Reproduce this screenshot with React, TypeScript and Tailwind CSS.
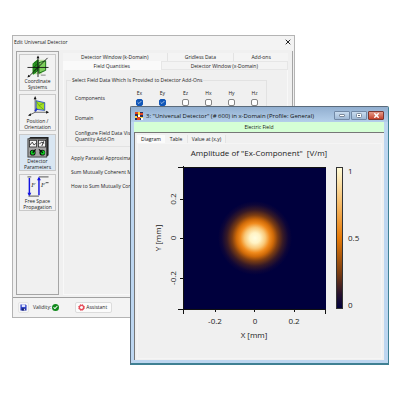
import React, { useState } from 'react';
import { Check, X } from 'lucide-react';

const FIELD_COMPONENTS = ['Ex', 'Ey', 'Ez', 'Hx', 'Hy', 'Hz'];

function CoordinateIcon() {
  return (
    <svg viewBox="0 0 24 24" className="h-6 w-6" fill="none">
      <path d="M6 9l5-4h8v10l-4 5H6z" fill="#b9dd9a" />
      <path d="M7 9l5-4v11l-5 4z" fill="#3fae2c" stroke="#0c7a10" strokeWidth="1" />
      <path d="M13 8l7-2v10l-7 3z" fill="#7fd05b" stroke="#146b14" strokeWidth="1" />
      <path d="M9 7v12M11 6v11M7 13l5-4M7 17l5-4" stroke="#085c08" strokeWidth="0.8" />
      <path d="M12 2v21M1 13h22M3 22L22 3" stroke="#111" strokeWidth="0.9" />
      <path d="M12 0.5l-1.5 3h3zM1 23.5l1-3 2 2z" fill="#111" />
      <path d="M15 21h5" stroke="#666" strokeWidth="0.8" />
    </svg>
  );
}

function PositionIcon() {
  return (
    <svg viewBox="0 0 24 24" className="h-6 w-6" fill="none">
      <path d="M9 18V4M9 18h13M9 18l-6 3" stroke="#444" strokeWidth="0.8" />
      <path d="M9 1l-1.5 3.5h3zM23.5 18l-3-1.5v3zM1.5 21.5l3-2.5v3z" fill="#111" />
      <path d="M10 6l9 2v8l-9-1z" fill="#a6df25" stroke="#2d4fd8" strokeWidth="1" />
      <path d="M10 6l3 5 6 5M13 11l6-3" stroke="#5ca319" strokeWidth="0.8" />
      <path d="M9 17l2-3" stroke="#2236cc" strokeWidth="2" />
    </svg>
  );
}

function DetectorIcon() {
  return (
    <svg viewBox="0 0 24 24" className="h-6 w-6" fill="none">
      <path d="M2 4l2-2h19v19l-2 2z" fill="#222" />
      <rect x="1.5" y="4" width="19.5" height="19" fill="#a4a4a4" stroke="#444" />
      <rect x="3" y="5.5" width="7.5" height="7" fill="#f2f2f2" stroke="#222" strokeWidth="0.8" />
      <rect x="12.5" y="5.5" width="7.500" height="7" fill="#f2f2f2" stroke="#222" strokeWidth="0.8" />
      <path d="M3.500 10.500l2.500-3 2 3 2-2M13.500 9.500l2-2 3 1M16 11.500l2-5" stroke="#222" strokeWidth="0.9" />
      <circle cx="6.500" cy="18.5" r="3" fill="#0b0b0b" />
      <circle cx="16.500" cy="18.5" r="3" fill="#0b0b0b" />
      <circle cx="6.5" cy="18.5" r="2.2" fill="#0fce22" />
      <circle cx="17" cy="18.5" r="2.2" fill="#0fce22" />
      <path d="M6.500 18.500l3-3.500M17 18.500l-4-3.500" stroke="#0b0b0b" strokeWidth="1.3" />
    </svg>
  );
}

function PropagationIcon() {
  return (
    <svg viewBox="0 0 24 24" className="h-6 w-6" fill="none">
      <path d="M3 3v18M13 3v18" stroke="#1414e0" strokeWidth="1.5" />
      <path d="M3 22.5l-2-4h4zM13 1.5l-2 4h4z" fill="#1414e0" />
      <path d="M1 2h4M13 2h10M2 22h11" stroke="#777" strokeWidth="1.2" />
      <text x="5" y="13" fontSize="7" fontStyle="italic" fontFamily="Liberation Serif" fill="#222">F</text>
      <text x="15" y="13" fontSize="7" fontStyle="italic" fontFamily="Liberation Serif" fill="#222">F</text>
      <path d="M20 8h3" stroke="#333" strokeWidth="0.9" />
    </svg>
  );
}

const SECTIONS = [
  { lines: ['Coordinate', 'Systems'], Icon: CoordinateIcon },
  { lines: ['Position /', 'Orientation'], Icon: PositionIcon },
  { lines: ['Detector', 'Parameters'], Icon: DetectorIcon },
  { lines: ['Free Space', 'Propagation'], Icon: PropagationIcon },
];

function Sidebar() {
  const [active, setActive] = useState(2);

  return (
    <nav className="flex w-[43px] shrink-0 flex-col gap-[3px] border border-[#a5a5a5] p-[2px]">
      {SECTIONS.map(({ lines, Icon }, i) => (
        <button
          key={lines[0]}
          type="button"
          onClick={() => setActive(i)}
          className={`flex h-[37px] flex-col items-center border border-[#c9c9c9] ${
            i === active ? 'bg-[#d9e6f2]' : 'bg-[#f2f2f2]'
          }`}
        >
          <Icon />
          <span className="text-[5px] leading-[6px] whitespace-nowrap">
            {lines[0]}
            <br />
            {lines[1]}
          </span>
        </button>
      ))}
    </nav>
  );
}

function FieldQuantities() {
  const [checked, setChecked] = useState(['Ex', 'Ey']);

  const toggle = (name: string) => {
    setChecked((prev) => (prev.includes(name) ? prev.filter((c) => c !== name) : [...prev, name]));
  };

  return (
    <div className="flex-1 border border-t-0 border-[#f8f8f8] pt-[7px] pr-5 pl-[2px]">
      <fieldset className="border border-[#e2e2e2] pb-1 pl-2">
        <legend className="-ml-1 px-px leading-[6px]">
          Select Field Data Which Is Provided to Detector Add-Ons
        </legend>
        <div className="flex items-center pt-[7px]">
          <span className="w-[53px]">Components</span>
          <div className="flex">
            {FIELD_COMPONENTS.map((name) => (
              <label key={name} className="flex w-[23px] flex-col items-center gap-[3px]">
                {name}
                <span className="grid h-[7px] w-[7px] place-items-center">
                  <input
                    type="checkbox"
                    checked={checked.includes(name)}
                    onChange={() => toggle(name)}
                    className="col-start-1 row-start-1 h-[7px] w-[7px] appearance-none rounded-[2px] border border-[#858585] bg-white checked:border-[#1056b8] checked:bg-[#1056b8]"
                  />
                  {checked.includes(name) && (
                    <Check className="pointer-events-none col-start-1 row-start-1 h-[5px] w-[5px] text-white" strokeWidth={3} />
                  )}
                </span>
              </label>
            ))}
          </div>
        </div>
        <p className="pt-[9px]">Domain</p>
        <p className="pt-[9px]">
          Configure Field Data Visualization
          <br />
          Quantity Add-On
        </p>
      </fieldset>
      <div className="flex flex-col gap-2 pt-2 pl-[5px]">
        <p>Apply Paraxial Approximation</p>
        <p>Sum Mutually Coherent Modes</p>
        <p>How to Sum Mutually Correlated</p>
      </div>
    </div>
  );
}

function EditDetectorDialog() {
  return (
    <section className="absolute top-[35px] left-[12px] flex h-[283px] w-[283px] flex-col border border-[#b4b4b4] bg-[#f0f0f0] text-[5px] leading-[6px] whitespace-nowrap text-[#222]">
      <header className="flex h-[14px] shrink-0 items-center justify-between bg-[#f3f3f3] pr-[2px] pb-[3px] pl-px">
        <h1>Edit Universal Detector</h1>
        <button type="button" aria-label="Close">
          <X className="h-2 w-2" strokeWidth={3} />
        </button>
      </header>
      <div className="flex flex-1 gap-1 pt-px pr-[2px] pb-[2px] pl-[3px]">
        <Sidebar />
        <div className="flex flex-1 flex-col border-r border-[#a5a5a5] pt-[2px] pr-1">
          <div role="tablist">
            <div className="flex h-2">
              <button type="button" role="tab" className="flex-[104] border-r border-[#e3e3e3] bg-[#f4f4f4]">Detector Window (k-Domain)</button>
              <button type="button" role="tab" className="flex-[66] border-r border-[#e3e3e3] bg-[#f4f4f4]">Gridless Data</button>
              <button type="button" role="tab" className="flex-[54] bg-[#f4f4f4]">Add-ons</button>
            </div>
            <div className="flex h-[9px]">
              <button type="button" role="tab" aria-selected="true" className="flex-[98] bg-[#fafafa]">Field Quantities</button>
              <button type="button" role="tab" className="flex-[126] border border-[#e6e6e6] bg-[#f3f3f3]">Detector Window (x-Domain)</button>
            </div>
          </div>
          <FieldQuantities />
        </div>
      </div>
      <footer className="flex h-5 shrink-0 items-center border-t border-[#a0a0a0] bg-[#f3f3f3] pb-px pl-[5px]">
        <button type="button" aria-label="Save" className="rounded-[2px] border border-[#e4e4e4] bg-[#f7f7f7] p-px">
          <svg viewBox="0 0 8 8" className="h-[7px] w-[7px]">
            <path d="M0.500 0.500h6l1 1v6h-7z" fill="#2c3fc5" />
            <path d="M2 0.500h4v3h-4z" fill="#dfe5ff" />
            <path d="M2 5h4v2.500h-4z" fill="#15206e" />
            <path d="M4.500 5.500h1v2h-1z" fill="#fff" />
          </svg>
        </button>
        <span className="pl-1">Validity:</span>
        <span className="ml-px flex h-[7px] w-[7px] items-center justify-center rounded-full bg-[#128a1d] text-white">
          <Check className="h-[5px] w-[5px]" strokeWidth={5} />
        </span>
        <button type="button" className="ml-4 flex h-[11px] items-center gap-px rounded-[2px] border border-[#dcdcdc] bg-[#fbfbfb] pr-1 pl-[2px]">
          <svg viewBox="0 0 8 8" className="h-[7px] w-[7px]" fill="none">
            <circle cx="4" cy="4" r="2.4" stroke="#e8505c" strokeWidth="1.4" />
            <circle cx="4" cy="4" r="3.3" stroke="#e22b3c" strokeWidth="1" strokeDasharray="1.5 1.1" />
          </svg>
          Assistant
        </button>
      </footer>
    </section>
  );
}

// Amplitude map with its axes and colour bar
function AmplitudeChart() {
  return (
    <svg viewBox="0 0 243 214" className="w-full" fill="#222" fontSize="8" textAnchor="middle">
      <defs>
        <radialGradient id="spot">
          <stop offset="0" stopColor="#fffde0" />
          <stop offset="0.14" stopColor="#fff3c4" />
          <stop offset="0.28" stopColor="#f9c878" />
          <stop offset="0.4" stopColor="#f08a1c" />
          <stop offset="0.5" stopColor="#cf6a08" />
          <stop offset="0.62" stopColor="#7c3d12" />
          <stop offset="0.76" stopColor="#371a26" />
          <stop offset="0.9" stopColor="#0e0638" />
          <stop offset="1" stopColor="#00003d" />
        </radialGradient>
        <linearGradient id="scale" x1="0" y1="0" x2="0" y2="1">
          <stop offset="0" stopColor="#fffcd8" />
          <stop offset="0.25" stopColor="#f6bd6c" />
          <stop offset="0.5" stopColor="#e67a08" />
          <stop offset="0.75" stopColor="#7a3d12" />
          <stop offset="0.9" stopColor="#26122e" />
          <stop offset="1" stopColor="#00003d" />
        </linearGradient>
      </defs>
      <text x="121" y="12" xmlSpace="preserve">Amplitude of "Ex-Component"{'  '}[V/m]</text>
      <rect x="45" y="23" width="143" height="142" fill="#00003d" />
      <circle cx="117" cy="94" r="37" fill="url(#spot)" />
      <path
        d="M40 23.5h148M45.5 22v148M40 165.5h148M187.5 165v5M42 55.5h3M42 94.5h3M42 134.5h3M77.5 165v3M116.5 165v3M156.5 165v3"
        stroke="#111"
        fill="none"
      />
      <text x="77" y="180">-0.2</text>
      <text x="117" y="180">0</text>
      <text x="156" y="180">0.2</text>
      <text x="116" y="194">X [mm]</text>
      <text transform="translate(38 55) rotate(-90)">0.2</text>
      <text transform="translate(38 94) rotate(-90)">0</text>
      <text transform="translate(38 134) rotate(-90)">-0.2</text>
      <text transform="translate(23 94) rotate(-90)">Y [mm]</text>
      <rect x="198.5" y="23.5" width="6" height="141" fill="url(#scale)" stroke="#333" />
      <text x="210" y="30" textAnchor="start">1</text>
      <text x="210" y="97" textAnchor="start">0.5</text>
      <text x="210" y="164" textAnchor="start">0</text>
    </svg>
  );
}

function DetectorResultWindow() {
  return (
    <section className="absolute top-[106px] left-[130px] flex h-[259px] w-[259px] flex-col rounded-t-[2px] border border-[#5b6b7b] border-r-[#3f8093] border-b-2 border-b-[#3f8093] bg-[#bdd6f0] text-[5px] leading-[6px] whitespace-nowrap text-[#111]">
      <header className="flex h-[15px] shrink-0 items-center bg-linear-to-b from-[#92afd0] to-[#b4cfea] pt-[2px] pr-1 pl-1">
        <svg viewBox="0 0 8 8" className="h-2 w-2">
          <rect width="8" height="8" fill="#26305e" />
          <path d="M0 0h3v2h-3zM5 1h3v2h-3zM2 5h3v3h-3z" fill="#e2451d" />
          <path d="M3 0h2v3h-2zM0 4h2v2h-2zM5 5h3v1h-3z" fill="#ffd53d" />
          <path d="M3 3h2v2h-2zM6 6h2v2h-2z" fill="#fff" />
        </svg>
        <h2 className="flex-1 pl-[3px] text-[6px]">3: "Universal Detector" (# 600) in x-Domain (Profile: General)</h2>
        <div className="flex gap-px">
          <button type="button" aria-label="Minimize" className="flex h-[9px] w-4 items-center justify-center rounded-[1px] border border-[#7289a6] bg-linear-to-b from-[#c9dcef] to-[#9fb9d6]">
            <span className="h-[3px] w-[6px] rounded-[1px] border border-[#7c8a9c] bg-white" />
          </button>
          <button type="button" aria-label="Maximize" className="flex h-[9px] w-4 items-center justify-center rounded-[1px] border border-[#7289a6] bg-linear-to-b from-[#c9dcef] to-[#9fb9d6]">
            <svg viewBox="0 0 6 5" className="h-[5px] w-[6px]">
              <rect x="0.5" y="0.5" width="5" height="4" rx="1" fill="#fff" stroke="#7c8a9c" />
              <rect x="2" y="2" width="2" height="1" fill="#5e6c80" />
            </svg>
          </button>
          <button type="button" aria-label="Close window" className="flex h-[9px] w-4 items-center justify-center rounded-[1px] border border-[#7d3730] bg-linear-to-b from-[#e39a8a] to-[#c4402a] text-white">
            <X className="h-[7px] w-[7px]" strokeWidth={5} />
          </button>
        </div>
      </header>
      <div className="mr-1 mb-[3px] ml-[3px] flex flex-1 flex-col bg-[#f0f0f0]">
        <div className="flex h-[10px] items-center justify-center bg-[#d5ffd5]">Electric Field</div>
        <div className="flex-1 border-t border-l border-[#777] px-[2px] pt-[2px]">
          <div role="tablist" className="flex h-2">
            <button type="button" role="tab" aria-selected="true" className="w-7 bg-[#fbfbfb]">Diagram</button>
            <button type="button" role="tab" className="w-[23px] border-r border-[#e4e4e4] bg-[#f3f3f3]">Table</button>
            <button type="button" role="tab" className="w-[38px] border-r border-[#e4e4e4] bg-[#f3f3f3]">Value at (x,y)</button>
          </div>
          <div className="border border-[#f5f5f5]">
            <AmplitudeChart />
          </div>
        </div>
      </div>
    </section>
  );
}

export default function App() {
  return (
    <main className="relative min-h-screen overflow-hidden bg-white font-['Open_Sans','Noto_Sans',sans-serif]">
      <EditDetectorDialog />
      <DetectorResultWindow />
    </main>
  );
}
